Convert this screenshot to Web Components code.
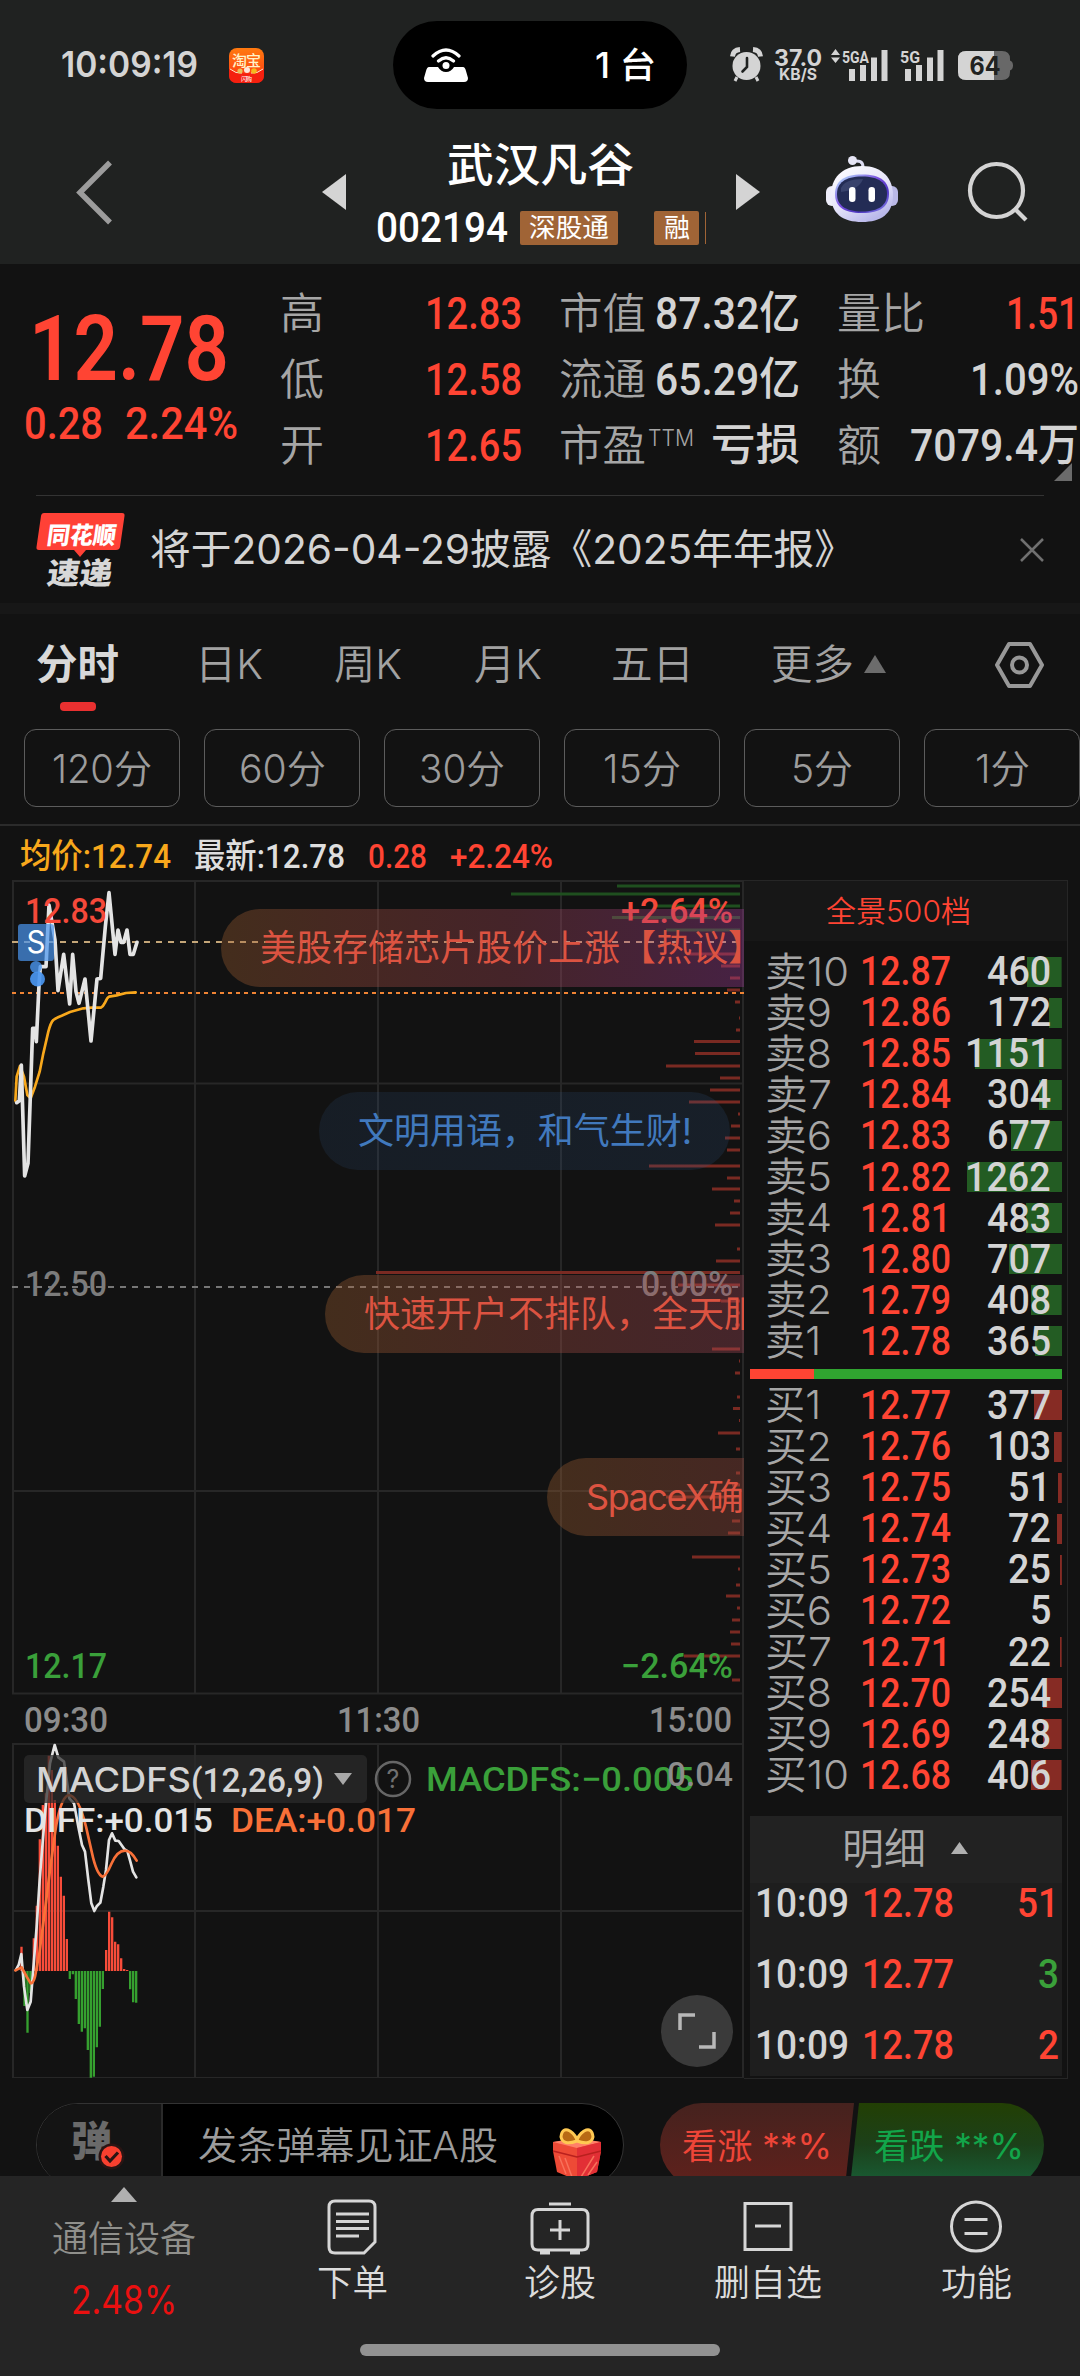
<!DOCTYPE html>
<html lang="zh-CN">
<head>
<meta charset="utf-8">
<title>武汉凡谷 002194</title>
<style>
  body {
    margin: 0;
    background: #121212;
    color: #d4d4d4;
    font-family: Inter, "Noto Sans CJK SC", sans-serif;
    overflow: hidden;
  }
</style>
</head>
<body>
<stock-page></stock-page>
<script>
const BASE = `
  * { box-sizing: border-box; }
  svg { display: block; flex: none; }
  .din { font-family: Roboto, "Noto Sans CJK SC", sans-serif; font-weight: 500; }
  .red { color: #ff4433; }
  .green { color: #3aa03a; }
`;

// Small helper: every view is a class with its own open shadow root
function view(name, render) {
  customElements.define(name, class extends HTMLElement {
    constructor() {
      super();
      this.attachShadow({ mode: "open" });
    }
    connectedCallback() {
      this.shadowRoot.innerHTML = `<style>${BASE}</style>` + render(this);
    }
  });
}

// One line of text squeezed or stretched to a given width
class FitText extends HTMLElement {
  constructor() {
    super();
    this.attachShadow({ mode: "open" });
    this.shadowRoot.innerHTML = `
      <style>
        :host { display: flex; flex: none; line-height: 1; }
        span { display: block; flex: none; white-space: pre; transform-origin: 0 50%; }
      </style>
      <span><slot></slot></span>`;
  }
  connectedCallback() {
    const w = Number(this.getAttribute("w"));
    const span = this.shadowRoot.querySelector("span");
    this.style.width = w + "px";
    const natural = span.getBoundingClientRect().width;
    if (natural) span.style.transform = `scaleX(${w / natural})`;
  }
}
customElements.define("fit-text", FitText);

view("status-bar", () => `
  <style>
    :host { display: flex; height: 130px; align-items: flex-start; background: #202221; color: #d4d4d4; }
    .time { font-size: 36px; font-weight: 600; margin: 46px 0 0 61px; }
    .app { margin: 48px 0 0 31px; }
    .island {
      display: flex; align-items: center; justify-content: space-between;
      width: 294px; height: 88px; margin: 21px 0 0 128px; padding: 0 31px;
      background: #000; border-radius: 44px; color: #fff;
    }
    .island fit-text { font-size: 35px; font-weight: 500; }
    .alarm { margin: 47px 0 0 43px; }
    .speed { margin: 49px 0 0 11px; font-weight: 700; }
    .speed fit-text + fit-text { margin: 0 0 0 5px; }
    .sig { margin: 48px 0 0 8px; }
    .bat { margin: 50px 0 0 12px; }
  </style>
  <fit-text class="time" w="137">10:09:19</fit-text>
  <svg class="app" width="36" height="36" viewBox="0 0 36 36">
    <defs><linearGradient id="a" x2="0" y2="1"><stop offset="0" stop-color="#ff7a0f"/><stop offset=".6" stop-color="#ff5012"/><stop offset="1" stop-color="#f51212"/></linearGradient></defs>
    <rect width="35" height="35" rx="8" fill="url(#a)"/>
    <path d="M0 21Q18 30 35 21V27Q35 35 27 35H8Q0 35 0 27Z" fill="#f5200f"/>
    <path d="M1 21Q7 26 13 25M34 21Q28 26 22 25" stroke="#ffe9d0" fill="none"/>
    <circle cx="11" cy="23" r="2.6" fill="#e9c25a"/><circle cx="18" cy="22" r="3" fill="#ffe5da"/><circle cx="25" cy="23" r="2.8" fill="#f4b91e"/>
    <text x="3" y="17.5" font-size="15" font-weight="500" fill="#fff3c8" textLength="29">淘宝</text>
    <text x="12" y="33" font-size="6" fill="#fff" textLength="11">闪购</text>
  </svg>
  <div class="island">
    <svg width="44" height="36" viewBox="0 0 44 36" fill="none" stroke="#fff" stroke-width="3.2" stroke-linecap="round">
      <path d="M9 9Q22-3 35 9M14.500 14Q22 7.500 29.500 14"/>
      <path d="M5 20H14Q17 25 22 25T30 20H39Q41 20 42 24L44 31Q44 35 40 35H4Q0 35 0 31L2 24Q3 20 5 20Z" fill="#fff" stroke="none"/>
      <circle cx="22" cy="18.500" r="3.500" fill="#fff" stroke="none"/>
    </svg>
    <fit-text w="61">1 台</fit-text>
  </div>
  <svg class="alarm" width="33" height="36" viewBox="0 0 33 36">
    <circle cx="16.500" cy="19" r="14" fill="#d4d4d4"/>
    <path d="M2.500 9.500Q3 3 10 2.500M30.500 9.500Q30 3 23 2.500" stroke="#d4d4d4" stroke-width="5" fill="none"/>
    <path d="M7 30L5 34M26 30L28 34" stroke="#d4d4d4" stroke-width="3"/>
    <path d="M17 11V20L12.500 24.500" stroke="#202221" stroke-width="2.600" fill="none" stroke-linecap="round"/>
  </svg>
  <div class="speed">
    <fit-text w="48" style="font-size:23px;line-height:19px">37.0</fit-text>
    <fit-text w="38" style="font-size:16px;line-height:13px;font-weight:700">KB/S</fit-text>
  </div>
  <svg class="sig" width="115" height="34" viewBox="0 0 115 34" fill="#d4d4d4">
    <path d="M1 7L5.500 1L10 7ZM1 9.500H10L5.500 15Z"/>
    <text x="12" y="14.500" font-size="17" font-weight="700" textLength="27" lengthAdjust="spacingAndGlyphs" font-family="Roboto">5GA</text>
    <path d="M19 21h6v12h-6ZM30 17h6v16h-6ZM41 9.500h6V33h-6ZM51.500 2h6V33h-6Z"/>
    <text x="70" y="14.500" font-size="17" font-weight="700" textLength="20" lengthAdjust="spacingAndGlyphs" font-family="Roboto">5G</text>
    <path d="M75 21h6v12h-6ZM86 17h6v16h-6ZM97 9.500h6V33h-6ZM107.500 2h6V33h-6Z"/>
  </svg>
  <svg class="bat" width="57" height="31" viewBox="0 0 57 31">
    <path d="M9 1H45Q53 1 53 9V10.500Q56 11.500 56 15.500T53 20.500V22Q53 30 45 30H9Q1 30 1 22V9Q1 1 9 1Z" fill="#686868"/>
    <path d="M9 1H37V30H9Q1 30 1 22V9Q1 1 9 1Z" fill="#d4d4d4"/>
    <text x="12.500" y="25" font-size="25" font-weight="700" fill="#202221" textLength="31" lengthAdjust="spacingAndGlyphs" font-family="Inter">64</text>
  </svg>
`);

view("stock-header", () => `
  <style>
    :host { display: flex; height: 134px; background: #202221; color: #fff; }
    .back { margin: 30px 0 0 75px; }
    .prev { margin: 44px 0 0 207px; }
    .mid { width: 390px; display: flex; flex-direction: column; }
    h1 { margin: 11px 0 0 101px; font-size: 46px; font-weight: 500; }
    .sub { display: flex; align-items: center; height: 34px; margin: 24px 0 0 30px; }
    .code { font-size: 42px; }
    .tag { display: flex; justify-content: center; align-items: center; height: 34px; border-radius: 2px; background: #a06436; font-size: 26px; }
    .bar { width: 1px; height: 32px; margin-left: 6px; background: #a06436; }
    .next { margin: 44px 0 0; }
    .bot { margin: 24px 0 0 65px; }
    .search { margin: 31px 0 0 68px; }
  </style>
  <svg class="back" width="40" height="66" viewBox="0 0 40 66"><path d="M35 2.500L5 32.500L35 62.500" fill="none" stroke="#9c9c9c" stroke-width="5.500"/></svg>
  <svg class="prev" width="24" height="36" viewBox="0 0 24 36"><path d="M24 0V36L0 18Z" fill="#d4d4d4"/></svg>
  <div class="mid">
    <h1><fit-text w="187">武汉凡谷</fit-text></h1>
    <div class="sub">
      <fit-text class="code din" w="132">002194</fit-text>
      <div class="tag" style="width:98px;margin-left:12px"><fit-text w="80">深股通</fit-text></div>
      <div class="tag" style="width:45px;margin-left:36px"><fit-text w="26">融</fit-text></div>
      <div class="bar"></div>
    </div>
  </div>
  <svg class="next" width="24" height="36" viewBox="0 0 24 36"><path d="M0 0V36L24 18Z" fill="#d4d4d4"/></svg>
  <svg class="bot" width="74" height="70" viewBox="0 0 74 70">
    <defs>
      <linearGradient id="h" x2=".6" y2="1"><stop offset="0" stop-color="#fff"/><stop offset=".6" stop-color="#e6e5fa"/><stop offset="1" stop-color="#b9b8ea"/></linearGradient>
      <linearGradient id="r" x2="1" y2="1"><stop offset="0" stop-color="#bcecff"/><stop offset=".45" stop-color="#7a4fe0"/><stop offset=".7" stop-color="#4c35c0"/><stop offset="1" stop-color="#8f8cf0"/></linearGradient>
    </defs>
    <path d="M27 7.500Q38 5 38 13" stroke="#dcdcf2" stroke-width="3" fill="none"/>
    <circle cx="27.500" cy="6.500" r="4.500" fill="#e6e6f6"/>
    <rect x="1" y="32" width="12" height="20" rx="6" fill="#eeeefa"/><rect x="61" y="32" width="12" height="20" rx="6" fill="#b9b8e6"/>
    <path d="M37 12C58 12 68 25 68 41C68 60 56 68 37 68S6 60 6 41C6 25 16 12 37 12Z" fill="url(#h)"/>
    <path d="M37 20.500C56 20.500 64 28 64 40S56 59 37 59S10 52 10 40S18 20.500 37 20.500Z" fill="url(#r)"/>
    <path d="M37 22.500C54 22.500 62 29 62 40S54 57.500 37 57.500S12 51 12 40S20 22.500 37 22.500Z" fill="#232c55"/>
    <path d="M16 34Q20 25 38 25Q34 36 16 38Z" fill="#46517c" opacity=".6"/>
    <rect x="24" y="33" width="6.500" height="15" rx="3.200" fill="#fff"/><rect x="43.500" y="33" width="6.500" height="15" rx="3.200" fill="#fff"/>
  </svg>
  <svg class="search" width="62" height="62" viewBox="0 0 62 62" fill="none" stroke="#d4d4d4" stroke-width="4.200"><circle cx="29.500" cy="29.500" r="26.500"/><path d="M48 48L59 59"/></svg>
`);

view("quote-panel", () => {
  const cell = (label, lw, value, vw, cls = "") => `
    <div class="cell"><fit-text class="k" w="${lw}">${label}</fit-text>
    <fit-text class="v din ${cls}" w="${vw}">${value}</fit-text></div>`;
  return `
  <style>
    :host { display: flex; height: 231px; position: relative; }
    .last { width: 280px; flex: none; padding: 35px 0 0 22px; }
    .price { font-size: 91px; margin-left: 7px; font-weight: 600; }
    .chg { display: flex; gap: 22px; font-size: 45px; margin-left: 2px; }
    .chg fit-text { line-height: 50px; }
    .grid { display: grid; grid-template-columns: 242px 241px 242px; grid-auto-rows: 66px; column-gap: 37px; padding-top: 16px; }
    .cell { display: flex; justify-content: space-between; align-items: center; }
    .k { font-size: 43px; font-weight: 350; color: #a6a6a6; }
    .v { font-size: 45px; }
    .ttm { display: flex; align-items: center; }
    .ttm fit-text + fit-text { font-size: 23px; margin: -14px 0 0 2px; }
    .corner { position: absolute; left: 1054px; top: 199px; }
  </style>
  <div class="last">
    <fit-text class="price din red" w="200" style="line-height:100px">12.78</fit-text>
    <div class="chg"><fit-text class="din red" w="79">0.28</fit-text><fit-text class="din red" w="113">2.24%</fit-text></div>
  </div>
  <div class="grid">
    ${cell("高", 44, "12.83", 97, "red")}
    ${cell("市值", 87, "87.32亿", 145)}
    ${cell("量比", 88, "1.51", 73, "red")}
    ${cell("低", 44, "12.58", 97, "red")}
    ${cell("流通", 87, "65.29亿", 145)}
    ${cell("换", 44, "1.09%", 109)}
    ${cell("开", 44, "12.65", 97, "red")}
    <div class="cell"><div class="ttm"><fit-text class="k" w="87">市盈</fit-text><fit-text class="k" w="46">TTM</fit-text></div>
    <fit-text class="v din" w="89" style="font-size:43px">亏损</fit-text></div>
    ${cell("额", 44, "7079.4万", 169)}
  </div>
  <svg class="corner" width="18" height="18" viewBox="0 0 18 18"><path d="M18 0V18H0Z" fill="#6b6b6b"/></svg>`;
});

view("news-strip", () => `
  <style>
    :host { display: flex; align-items: center; height: 108px; margin: 0 36px; border-top: 1px solid #333; }
    .msg { font-size: 41px; font-weight: 400; margin-left: 24px; color: #d4d4d4; }
    .close { margin-left: auto; }
  </style>
  <svg width="90" height="76" viewBox="0 0 90 76">
    <path d="M8 1H86Q89 1 88.500 4L84 35Q83.500 38 80 38H50L44 45L38 38H3Q0 38 .5 35L5 4Q5.500 1 8 1Z" fill="#ff4136"/>
    <text transform="translate(10 32) skewX(-8)" font-size="24" font-weight="900" fill="#fff" textLength="69" lengthAdjust="spacingAndGlyphs">同花顺</text>
    <text transform="translate(10 72) skewX(-8)" font-size="30" font-weight="900" fill="#d8d8d8" textLength="65" lengthAdjust="spacingAndGlyphs">速递</text>
  </svg>
  <fit-text class="msg" w="705">将于2026-04-29披露《2025年年报》</fit-text>
  <svg class="close" width="24" height="24" viewBox="0 0 24 24"><path d="M1 1L23 23M23 1L1 23" stroke="#707070" stroke-width="2.500"/></svg>
`);

view("period-tabs", () => `
  <style>
    :host { display: block; height: 223px; border-top: 11px solid #171717; border-bottom: 2px solid #2b2b2b; }
    .tabs { display: flex; height: 115px; align-items: center; padding: 0 36px 14px 36px; color: #a2a2a2; font-size: 41px; }
    fit-text { font-weight: 350; }
    .on { position: relative; color: #d8d8d8; }
    .on fit-text { font-weight: 700; }
    .on i { position: absolute; left: 24px; top: 58px; width: 36px; height: 9px; border-radius: 4px; background: #e93030; }
    .mins { display: flex; gap: 24px; margin-left: 24px; }
    .mins div {
      flex: none; display: flex; align-items: center; justify-content: center;
      width: 156px; height: 78px; border: 1.500px solid #5c5c5c; border-radius: 12px;
      font-size: 39px; color: #9c9c9c;
    }
  </style>
  <div class="tabs">
    <div class="on"><fit-text w="83">分时</fit-text><i></i></div>
    <fit-text w="68" style="margin-left:76px">日K</fit-text>
    <fit-text w="68" style="margin-left:71px">周K</fit-text>
    <fit-text w="68" style="margin-left:72px">月K</fit-text>
    <fit-text w="83" style="margin-left:69px">五日</fit-text>
    <fit-text w="83" style="margin-left:77px">更多</fit-text>
    <svg style="margin-left:9px" width="24" height="20" viewBox="0 0 24 20"><path d="M12 0L23 18H1Z" fill="#6c6c6c"/></svg>
    <svg style="margin-left:auto" width="49" height="48" viewBox="0 0 49 48" fill="none" stroke="#989898" stroke-width="4"><path d="M14 3H35L47 24L35 45H14L2 24Z" stroke-linejoin="round"/><circle cx="24.500" cy="24" r="7.500"/></svg>
  </div>
  <div class="mins">
    <div><fit-text w="100">120分</fit-text></div>
    <div><fit-text w="87">60分</fit-text></div>
    <div><fit-text w="86">30分</fit-text></div>
    <div><fit-text w="78">15分</fit-text></div>
    <div><fit-text w="62">5分</fit-text></div>
    <div><fit-text w="55">1分</fit-text></div>
  </div>
`);

view("price-line", () => `
  <style>
    :host { display: flex; align-items: center; height: 55px; padding: 4px 0 0 20px; gap: 23px; }
    fit-text { font-size: 34px; }
  </style>
  <fit-text class="din" w="151" style="color:#f8a81c">均价:12.74</fit-text>
  <fit-text class="din" w="151" style="color:#dedede">最新:12.78</fit-text>
  <fit-text class="din red" w="59">0.28</fit-text>
  <fit-text class="din red" w="103">+2.24%</fit-text>
`);

// [y, left] of each volume bar, all end at x = 740
const GREEN_VOL = [[886, 617], [894, 511], [906, 657], [917.500, 612], [930, 666]];
const RED_VOL = [
  [954, 687], [966, 721], [978, 730], [990, 727], [1002, 735], [1018, 739], [1030, 736],
  [1041.500, 694], [1053.500, 695], [1066, 666], [1078, 720], [1090, 710], [1102, 689], [1114, 738],
  [1126, 731], [1138, 725], [1150, 727], [1166, 649], [1178, 727], [1189, 712], [1201, 734],
  [1213, 730], [1225, 715], [1249, 737], [1261, 716], [1272.500, 376], [1285, 678], [1301, 721],
  [1313, 737], [1325, 735], [1349, 712], [1361, 739], [1373, 735], [1397, 737], [1408.500, 733],
  [1420.500, 739], [1433, 718], [1449, 736], [1473, 736], [1485, 732], [1497, 666], [1521, 732],
  [1533, 728], [1557, 692], [1569, 738], [1585, 736], [1596, 726], [1608, 737], [1620, 732],
  [1632, 730], [1644, 731], [1656, 684], [1680, 732],
];
// [x, y] of each MACD bar end, in thirds of a pixel, zero line at 993
const MACD = [
  [64, 920], [73, 1098], [82, 1178], [91, 1060], [101, 895], [110, 797], [119, 598], [128, 495],
  [137, 460], [146, 347], [155, 390], [164, 480], [173, 617], [182, 710], [191, 767], [200, 897],
  [209, 1017], [218, 1003], [227, 1077], [236, 1152], [245, 1175], [254, 1165], [263, 1230],
  [272, 1313], [281, 1310], [290, 1222], [299, 1160], [308, 1047], [318, 930], [327, 815],
  [336, 832], [345, 905], [354, 913], [363, 955], [372, 987], [381, 990], [390, 1048],
  [399, 1087], [408, 1088],
];

const bubble = (y, x, w, kind, text, len) => `
  <path d="M${x + 39} ${y}H${kind === "blue" ? x + w - 39 : 744}${kind === "blue" ? `A39 39 0 0 1 ${x + w - 39} ${y + 78}` : "v78"}H${x + 39}A39 39 0 0 1 ${x + 39} ${y}Z" fill="url(#${kind})"/>
  <text x="${x + 39}" y="${y + 52}" font-size="36" font-weight="400" class="cjk" fill="${kind === "blue" ? "#4179bd" : "#dc5341"}" textLength="${len}">${text}</text>`;

view("minute-chart", () => `
  <style>
    :host { display: block; width: 744px; height: 1198px; overflow: hidden; }
    text { font-family: Roboto, "Noto Sans CJK SC", sans-serif; }
    .cjk { font-family: Inter, "Noto Sans CJK SC", sans-serif; }
    .num text { font-size: 35px; font-weight: 500; }
  </style>
  <svg width="744" height="1200" viewBox="0 880 744 1200">
    <defs>
      <linearGradient id="hot" gradientUnits="userSpaceOnUse" x1="221" x2="744" y1="0" y2="0"><stop offset="0" stop-color="#a06030" stop-opacity=".35"/><stop offset=".25" stop-color="#a85040" stop-opacity=".35"/><stop offset=".55" stop-color="#ac4858" stop-opacity=".33"/><stop offset="1" stop-color="#a03c98" stop-opacity=".37"/></linearGradient>
      <linearGradient id="warm" gradientUnits="userSpaceOnUse" x1="325" x2="848" y1="0" y2="0"><stop offset="0" stop-color="#a06030" stop-opacity=".35"/><stop offset=".35" stop-color="#a85040" stop-opacity=".35"/><stop offset="1" stop-color="#ac4868" stop-opacity=".33"/></linearGradient>
      <linearGradient id="late" gradientUnits="userSpaceOnUse" x1="547" x2="900" y1="0" y2="0"><stop offset="0" stop-color="#a06030" stop-opacity=".35"/><stop offset="1" stop-color="#a84050" stop-opacity=".35"/></linearGradient>
      <linearGradient id="blue"><stop offset="0" stop-color="#2e5484" stop-opacity=".17"/><stop offset="1" stop-color="#2e5484" stop-opacity=".2"/></linearGradient>
    </defs>
    <g fill="none" stroke="#272727" stroke-width="2">
      <path d="M12 881H744M12 1083.500H744M12 1491H744M12 1693.500H744M13 881V1693.500M195 881V1693.500M378 881V1693.500M561 881V1693.500M743 881V2078"/>
      <path d="M12 1744H744M12 1911H744M12 2078H744M13 1744V2078M195 1744V2078M378 1744V2078M561 1744V2078"/>
    </g>
    <path d="${GREEN_VOL.map(([y, x]) => `M${x} ${y}H740`).join("")}" stroke="#1f4f1f" stroke-width="3"/>
    <path d="${RED_VOL.map(([y, x]) => `M${x} ${y}H740`).join("")}" stroke="#7a2a22" stroke-width="3"/>
    <path d="M12 1287H744" stroke="#777" stroke-width="2" stroke-dasharray="6 6"/>
    <path d="M12 942H744" stroke="#c4a678" stroke-width="2" stroke-dasharray="6 6"/>
    <path d="M12 993H744" stroke="#f08434" stroke-width="2" stroke-dasharray="4 4"/>
    <g transform="translate(0 860) scale(.33333)" fill="none" stroke-linejoin="round" stroke-linecap="round">
      <path d="M46 722L50 650L60 618L72 650L82 705L92 715L105 680L119 635L130 580L145 515Q152 488 160 480Q172 472 185 467L210 456L250 445L275 443H303Q309 440 315 428Q322 412 327 410L350 406L378 399L407 397" stroke="#f8a81c" stroke-width="8"/>
      <path d="M50 728L58 722L64 615L74 948L84 910L98 505H105L109 545L117 375L121 320H138L147 135L165 240L174 392L191 283L209 432L218 283L228 395L237 430L255 357L273 543L291 357L302 355L316 200L327 98L345 283L354 210L363 247H371L381 210L390 283H400L411 247" stroke="#e4e4e4" stroke-width="11"/>
    </g>
    <g class="num">
      <text x="25" y="922.500" fill="#f5493a" textLength="82" lengthAdjust="spacingAndGlyphs">12.83</text>
      <text x="621" y="922.500" fill="#f5493a" textLength="112" lengthAdjust="spacingAndGlyphs">+2.64%</text>
      <text x="25" y="1296" fill="#7c7c7c" textLength="82" lengthAdjust="spacingAndGlyphs">12.50</text>
      <text x="641" y="1296" fill="#7c7c7c" textLength="92" lengthAdjust="spacingAndGlyphs">0.00%</text>
      <text x="25" y="1677.500" fill="#3aa03a" textLength="82" lengthAdjust="spacingAndGlyphs">12.17</text>
      <text x="621" y="1677.500" fill="#3aa03a" textLength="112" lengthAdjust="spacingAndGlyphs">−2.64%</text>
      <text x="24" y="1732" fill="#8c8c8c" textLength="84" lengthAdjust="spacingAndGlyphs">09:30</text>
      <text x="337" y="1732" fill="#8c8c8c" textLength="83" lengthAdjust="spacingAndGlyphs">11:30</text>
      <text x="649" y="1732" fill="#8c8c8c" textLength="83" lengthAdjust="spacingAndGlyphs">15:00</text>
    </g>
    <rect x="18" y="924" width="36" height="37" rx="3" fill="#4a96f0" fill-opacity=".7"/>
    <circle cx="36" cy="967" r="6" fill="#4a96f0" fill-opacity=".8"/><circle cx="37.500" cy="979" r="7.500" fill="#4a96f0" fill-opacity=".92"/>
    <text x="26.500" y="953" font-size="31" class="cjk" fill="#fff" textLength="19" lengthAdjust="spacingAndGlyphs">S</text>

    ${bubble(909, 221, 523, "hot", "美股存储芯片股价上涨【热议】", 504)}
    ${bubble(1092, 319, 411, "blue", "文明用语，和气生财!", 334)}
    ${bubble(1275, 325, 419, "warm", "快速开户不排队，全天服", 396)}
    ${bubble(1458, 547, 197, "late", "SpaceX确", 158)}

    <g transform="translate(0 1640) scale(.33333)" fill="none" stroke-linejoin="round" stroke-linecap="round">
      <path d="${MACD.filter(([, y]) => y < 993).map(([x, y]) => `M${x - 3} ${y}h7V993h-7Z`).join("")}" fill="#f84c3a"/>
      <path d="${MACD.filter(([, y]) => y > 993).map(([x, y]) => `M${x - 3} 993h7V${y}h-7Z`).join("")}" fill="#35a02f"/>
      <path d="M48 990L56 975L64 942L72 1040L82 1110L92 1085L110 860L119 720L135 520L150 370L164 315L175 352L192 365L203 440L208 475L222 490L235 560L246 615L255 635L265 720L274 790L283 813L291 798L301 788L310 740L318 690L327 600L336 580L346 602L356 603L373 627L382 633L391 665L399 695L409 712" stroke="#e4e4e4" stroke-width="8"/>
      <path d="M46 991L65 982L80 1010L92 1030Q100 1030 105 1010L118 940L135 810L150 690L165 580Q180 475 205 465Q235 465 258 560L275 635Q290 705 308 710Q318 710 335 670Q352 632 375 632Q393 632 410 662" stroke="#f87038" stroke-width="8"/>
    </g>
    <rect x="24" y="1755" width="343" height="48" rx="5" fill="#2b2b2b" fill-opacity=".72"/>
    <path d="M334 1773H352L343 1785Z" fill="#a8a8a8"/>
    <circle cx="393" cy="1779" r="17" fill="none" stroke="#666" stroke-width="2.500"/>
    <text x="386.500" y="1788" font-size="25" class="cjk" fill="#707070">?</text>
    <g font-size="34">
      <text x="36" y="1792" class="cjk" font-weight="500" fill="#d4d4d4" textLength="155" lengthAdjust="spacingAndGlyphs">MACDFS</text>
      <text x="191" y="1792" font-weight="500" fill="#d4d4d4" textLength="133" lengthAdjust="spacingAndGlyphs">(12,26,9)</text>
      <text x="426" y="1791" font-weight="500" fill="#3aa03a" textLength="268" lengthAdjust="spacingAndGlyphs">MACDFS:−0.005</text>
      <text x="667" y="1786" font-weight="500" fill="#8c8c8c" textLength="66" lengthAdjust="spacingAndGlyphs">0.04</text>
      <text x="24" y="1832" font-weight="500" fill="#e4e4e4" textLength="189" lengthAdjust="spacingAndGlyphs">DIFF:+0.015</text>
      <text x="231" y="1832" font-weight="500" fill="#f87038" textLength="185" lengthAdjust="spacingAndGlyphs">DEA:+0.017</text>
    </g>
    <circle cx="697" cy="2031" r="36" fill="#3a3a3a"/>
    <path d="M680 2030V2015H695M714 2032V2047H699" fill="none" stroke="#b8b8b8" stroke-width="3.500"/>
  </svg>
`);

const ASKS = [[10, "12.87", 460], [9, "12.86", 172], [8, "12.85", 1151], [7, "12.84", 304], [6, "12.83", 677],
  [5, "12.82", 1262], [4, "12.81", 483], [3, "12.80", 707], [2, "12.79", 408], [1, "12.78", 365]];
const BIDS = [[1, "12.77", 377], [2, "12.76", 103], [3, "12.75", 51], [4, "12.74", 72], [5, "12.73", 25],
  [6, "12.72", 5], [7, "12.71", 22], [8, "12.70", 254], [9, "12.69", 248], [10, "12.68", 406]];
const TICKS = [["12.78", 51, "red"], ["12.77", 3, "green"], ["12.78", 2, "red"]];

view("order-book", () => {
  const row = (side, color) => ([n, price, qty]) => `
    <div class="row">
      <fit-text class="lv" w="${n === 10 ? 84 : n === 1 ? 56 : 67}">${side}${n}</fit-text>
      <fit-text class="din red" w="91">${price}</fit-text>
      <div class="qty" style="background:linear-gradient(${color},${color}) right center/${qty < 10 ? 0 : Math.max(1, qty * .0753)}px 30px no-repeat"><fit-text class="din" w="${String(qty).length * 21.400}">${qty}</fit-text></div>
    </div>`;
  return `
  <style>
    :host { display: block; width: 324px; height: 1199px; border: 1px solid #262626; border-left: 0; }
    header { height: 60px; display: flex; justify-content: center; align-items: center; background: #171717; font-size: 30px; padding: 0 15px 0 0; }
    .rows { padding: 10px 5px 0 21px; }
    .row { display: flex; align-items: center; height: 41.100px; font-size: 41px; }
    .lv { font-size: 40px; font-weight: 350; color: #a6a6a6; }
    .row .lv + fit-text { margin-left: auto; }
    .qty { display: flex; justify-content: flex-end; width: 111px; height: 41px; align-items: center; padding-right: 11px; }
    .split { height: 10px; margin: 7px 5px 0 6px; background: linear-gradient(90deg, #ff4433 64px, #30a430 64px); }
    .buy { padding-top: 6px; }
    .detail { margin: 20px 5px 0 6px; height: 260px; background: #1e1e1e; }
    .cap { display: flex; align-items: center; height: 67px; padding-left: 92px; gap: 25px; background: #222; font-size: 42px; color: #aaa; }
    .cap svg { margin-top: -3px; }
    .tick { display: flex; align-items: center; height: 42px; margin-bottom: 29px; padding: 0 3px 0 5px; font-size: 41px; }
    .tick :nth-child(2) { margin-left: 13px; }
    .tick :last-child { margin-left: auto; }
  </style>
  <header><fit-text class="red" w="145" style="font-weight:350">全景500档</fit-text></header>
  <div class="rows">${ASKS.map(row("卖", "#235c23")).join("")}</div>
  <div class="split"></div>
  <div class="rows buy">${BIDS.map(row("买", "#862b24")).join("")}</div>
  <div class="detail">
    <div class="cap"><fit-text w="84" style="font-weight:350">明细</fit-text><svg width="17" height="12" viewBox="0 0 17 12"><path d="M8.500 0L17 12H0Z" fill="#b0b0b0"/></svg></div>
    ${TICKS.map(([p, q, c]) => `<div class="tick"><fit-text class="din" w="94">10:09</fit-text><fit-text class="din red" w="92">${p}</fit-text><fit-text class="din ${c}" w="${String(q).length * 21}">${q}</fit-text></div>`).join("")}
  </div>`;
});

view("danmu-bar", () => `
  <style>
    :host { display: flex; height: 97px; padding: 24px 36px 0; overflow: hidden; background: #121212; }
    .pill { display: flex; flex: none; width: 588px; height: 84px; border: 1px solid #333; border-radius: 42px; overflow: hidden; background: #000; }
    .sw { width: 126px; flex: none; background: #141414; border-right: 2px solid #2a2a2a; }
    .hint { font-size: 38px; font-weight: 350; color: #9c9c9c; margin: 22px 0 0 35px; }
    .gift { margin: 24px 0 0 54px; }
    .vote { margin-left: auto; }
    text { font-size: 35px; }
  </style>
  <div class="pill">
    <div class="sw"><svg width="126" height="84" viewBox="37 2104 126 84">
      <text x="71" y="2156" font-weight="900" fill="#6a6a6a" style="font-size:41px">弹</text>
      <circle cx="111.500" cy="2156.500" r="13" fill="#2a1514"/><circle cx="111.500" cy="2156.500" r="10.500" fill="#f8402f"/>
      <path d="M105.500 2156L110 2161L118 2152.500" fill="none" stroke="#2a1514" stroke-width="3.200"/>
    </svg></div>
    <fit-text class="hint" w="300">发条弹幕见证A股</fit-text>
    <svg class="gift" width="50" height="60" viewBox="0 0 50 60">
      <path d="M1 14L25 11L49 14V23L45 44L24 52L5 44L1 23Z" fill="#ee4a36"/>
      <path d="M1 14L25 20L49 14L25 10Z" fill="#ff8068"/><path d="M25 20V52L45 44L49 23V14Z" fill="#e22f35"/>
      <path d="M1 23L25 29L49 23" stroke="#b9201e" stroke-width="1.500" fill="none"/>
      <path d="M7 28L14 46M13 30L20 49M42 28L29 49M45 34L36 47" stroke="#f8705a" stroke-width="1.500"/>
      <path d="M25 13Q11 18 9 9Q10-1 18 3Q24 7 25 13Q26 7 32 3Q40-1 41 9Q39 18 25 13Z" fill="#b86a14" stroke="#ffc952" stroke-width="3"/>
    </svg>
  </div>
  <svg class="vote" width="384" height="84" viewBox="0 0 384 84">
    <defs>
      <linearGradient id="up" x2="0" y2="1"><stop offset="0" stop-color="#45221e"/><stop offset="1" stop-color="#60211c"/></linearGradient>
      <linearGradient id="dn" x2="0" y2="1"><stop offset="0" stop-color="#223f04"/><stop offset=".5" stop-color="#1c401a"/><stop offset="1" stop-color="#186038"/></linearGradient>
    </defs>
    <path d="M42 0H194L185 84H42A42 42 0 0 1 42 0Z" fill="url(#up)"/>
    <path d="M199 0H342A42 42 0 0 1 342 84H190Z" fill="url(#dn)"/>
    <text x="22" y="56" fill="#ee4538" textLength="150" lengthAdjust="spacingAndGlyphs">看涨 **%</text>
    <text x="214" y="56" fill="#12a54a" textLength="150" lengthAdjust="spacingAndGlyphs">看跌 **%</text>
  </svg>
`);

view("bottom-nav", () => `
  <style>
    :host { display: block; height: 201px; background: #252525; }
    nav { display: flex; height: 168px; }
    .sector { width: 248px; flex: none; display: flex; flex-direction: column; align-items: center; padding-top: 11px; }
    .item { width: 208px; flex: none; display: flex; flex-direction: column; align-items: center; padding-top: 22px; }
    .item fit-text { font-size: 36px; font-weight: 350; color: #dcdcdc; margin-top: 7px; }
    .item svg { fill: none; stroke: #d6d6d6; stroke-width: 3; }
    .home { width: 360px; height: 12px; margin: 0 auto; border-radius: 6px; background: #929292; }
  </style>
  <nav>
    <div class="sector">
      <svg width="26" height="15" viewBox="0 0 26 15"><path d="M13 0L26 15H0Z" fill="#b0b0b0"/></svg>
      <fit-text w="144" style="font-size:36px;margin:19px 0 0;font-weight:350;color:#90908c">通信设备</fit-text>
      <fit-text w="106" style="font-size:39px;margin-top:23px;font-weight:400;color:#ea1010">2.48%</fit-text>
    </div>
    <div class="item"><svg width="52" height="60" viewBox="0 0 52 60"><path d="M9 3H43Q49 3 49 9V44L38 55H9Q3 55 3 49V9Q3 3 9 3ZM10 16H43M10 23.500H43M10 30.500H43M10 38H33"/></svg><fit-text w="71">下单</fit-text></div>
    <div class="item"><svg width="60" height="60" viewBox="0 0 60 60"><path d="M8 11.500H52Q58 11.500 58 18V46Q58 52 52 52H8Q2 52 2 46V18Q2 11.500 8 11.500ZM19 6H41M10 55H20M40 55H50M20 32H40M30 22V42"/></svg><fit-text w="72">诊股</fit-text></div>
    <div class="item"><svg width="50" height="60" viewBox="0 0 50 60"><path d="M2 5.500H48V51.500H2ZM12 28H38"/></svg><fit-text w="108">删自选</fit-text></div>
    <div class="item"><svg width="52" height="60" viewBox="0 0 52 60"><circle cx="26" cy="28.500" r="24.500"/><path d="M14.500 21.500H37.500M14.500 35.500H37.500"/></svg><fit-text w="71">功能</fit-text></div>
  </nav>
  <div class="home"></div>
`);

view("stock-page", () => `
  <style>
    :host { display: block; width: 1080px; height: 2376px; overflow: hidden; background: #121212; }
    .charts { display: flex; height: 1199px; margin-top: -1px; }
  </style>
  <status-bar></status-bar>
  <stock-header></stock-header>
  <quote-panel></quote-panel>
  <news-strip></news-strip>
  <period-tabs></period-tabs>
  <price-line></price-line>
  <div class="charts"><minute-chart></minute-chart><order-book></order-book></div>
  <danmu-bar></danmu-bar>
  <bottom-nav></bottom-nav>
`);
</script>
</body>
</html>
